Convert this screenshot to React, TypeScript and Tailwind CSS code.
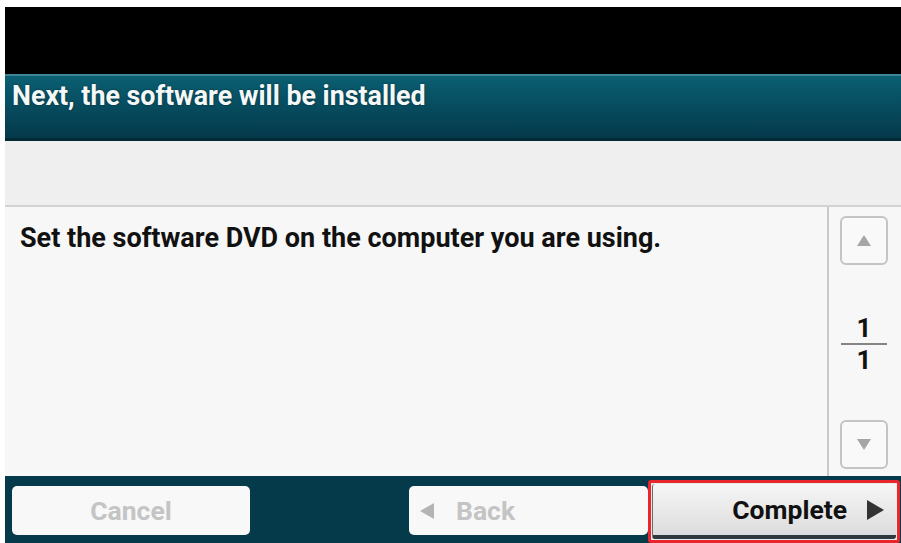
import React from "react";

export default function App() {
  return (
    <div
      className="w-[901px] h-[543px] bg-white pl-[5px] pt-[7px] overflow-hidden"
      style={{ fontFamily: "Roboto, 'Liberation Sans', sans-serif" }}
    >
      <div className="flex flex-col w-[896px] h-[536px]">
        {/* black status band */}
        <div className="h-[67px] bg-black" />
        {/* teal header */}
        <div className="h-[67px] flex flex-col bg-gradient-to-b from-[#0b5f72] to-[#04394b] border-t-[2px] border-t-[#3f8496] border-b-[3px] border-b-[#022a36]">
          <div className="pl-[7px] pt-[5px] text-[26.8px] font-bold text-[#f4f8f8] leading-[30px] [text-shadow:0_0_2px_rgba(0,0,0,0.5)]">
            Next, the software will be installed
          </div>
        </div>
        {/* gray band */}
        <div className="h-[66px] bg-[#efefef] border-b-[2px] border-b-[#d2d2d2]" />
        {/* content */}
        <div className="h-[269px] flex bg-[#f7f7f7]">
          <div className="flex-1 pl-[15px] pt-[17px] text-[27px] font-bold text-[#111] leading-[28px]">
            Set the software DVD on the computer you are using.
          </div>
          <div className="w-[2px] bg-[#c9c9c9]" />
          <div className="w-[72px] flex flex-col items-center pt-[9px] pb-[7px] pr-[2px]">
            <div className="w-[48px] h-[49px] rounded-[6px] border-[2px] border-[#c4c4c4] bg-[#f9f9f9] flex items-center justify-center">
              <div className="w-0 h-0 border-l-[7px] border-r-[7px] border-b-[11px] border-l-transparent border-r-transparent border-b-[#a6a6a6]" />
            </div>
            <div className="flex-1 flex flex-col items-center justify-center text-[26px] font-bold text-[#111] leading-[24px] pt-[2px]">
              <span>1</span>
              <div className="w-[46px] h-[2px] bg-[#858585] my-[3px]" />
              <span>1</span>
            </div>
            <div className="w-[48px] h-[49px] rounded-[6px] border-[2px] border-[#c4c4c4] bg-[#f9f9f9] flex items-center justify-center">
              <div className="w-0 h-0 border-l-[7px] border-r-[7px] border-t-[11px] border-l-transparent border-r-transparent border-t-[#a6a6a6]" />
            </div>
          </div>
        </div>
        {/* footer */}
        <div className="h-[67px] bg-[#053a4a] flex items-start relative">
          <div className="mt-[10px] ml-[7px] w-[238px] h-[49px] rounded-[5px] bg-[#f8f8f8] flex items-center justify-center text-[26.5px] font-bold text-[#c4c4c4]">
            Cancel
          </div>
          <div className="mt-[10px] ml-[159px] w-[239px] h-[49px] rounded-[5px] bg-[#f8f8f8] flex items-center pl-[11px] text-[26.5px] font-bold text-[#c4c4c4]">
            <div className="w-0 h-0 border-t-[8px] border-b-[8px] border-r-[14px] border-t-transparent border-b-transparent border-r-[#b4b4b4] mr-[22px]" />
            Back
          </div>
          <div className="mt-[4px] ml-[0px] w-[252px] h-[63px] border-[3px] border-[#e8262c] rounded-[3px] p-[1px] bg-[#e9ecec]">
            <div className="w-full h-full rounded-[3px] bg-gradient-to-b from-[#f6f6f6] to-[#dcdcdc] border-b-[4px] border-b-[#2e3a3e] border-l border-l-[#6a6a6a] flex items-center justify-end pr-[12px] text-[26.5px] font-bold text-[#111]">
              Complete
              <div className="w-0 h-0 border-t-[10px] border-b-[10px] border-l-[17px] border-t-transparent border-b-transparent border-l-[#333] ml-[20px]" />
            </div>
          </div>
        </div>
      </div>
    </div>
  );
}
